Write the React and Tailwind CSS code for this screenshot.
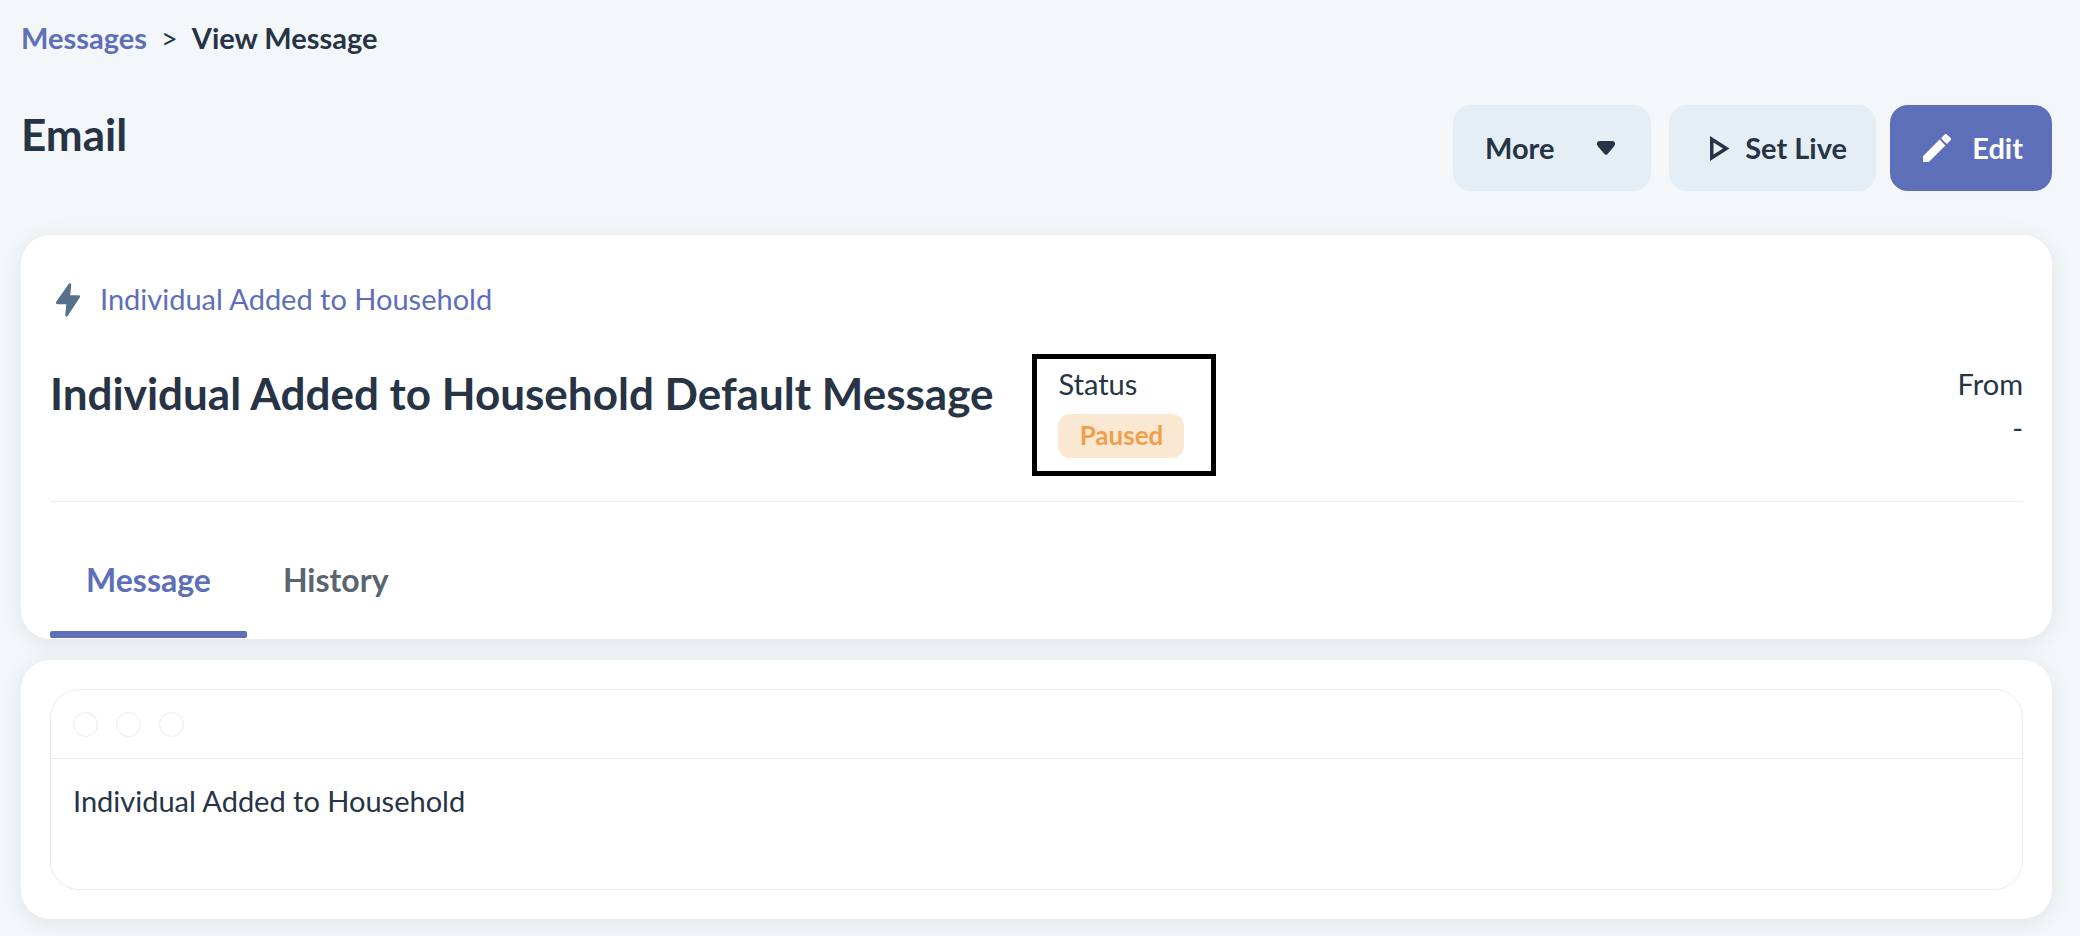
import { useState } from "react";

const tabs = ["Message", "History"];

function BoltIcon() {
  return (
    <svg width="24" height="34" viewBox="0 0 24 34" fill="#54708a" aria-hidden="true">
      <path d="M13 0.5C14.2 -0.3 15.4 0.6 15.2 2L14.2 12.2H22.5C24 12.2 24.4 13.4 23.7 14.6L11.6 33C10.6 34.3 9.2 33.6 9.3 32.2L10.3 21.2H1.4C0 21.2 -0.4 19.8 0.4 18.6Z" />
    </svg>
  );
}

function CaretIcon() {
  return (
    <svg width="18" height="14" viewBox="0 0 18 14" fill="currentColor" aria-hidden="true">
      <path d="M2.6 0H15.4C17.2 0 18 1 18 2.6C18 3.8 17.8 4.4 17 5.4L11 12.4C9.8 14.2 8.2 14.2 7 12.4L1 5.4C0.2 4.4 0 3.8 0 2.6C0 1 0.8 0 2.6 0Z" />
    </svg>
  );
}

function PlayIcon() {
  return (
    <svg width="20" height="25" viewBox="0 0 20 25" fill="currentColor" aria-hidden="true">
      <path fillRule="evenodd" d="M0 0L19.5 12.5L0 25ZM3.5 6.4V18.6L13 12.5Z" />
    </svg>
  );
}

function PencilIcon() {
  return (
    <svg width="28" height="28" viewBox="3 3 18 18" fill="currentColor" aria-hidden="true">
      <path d="M3 17.25V21h3.75L17.4 10.35l-3.75-3.75L3 17.25zM20.71 7.04a1 1 0 0 0 0-1.41l-2.34-2.34a1 1 0 0 0-1.41 0l-2.4 2.4 3.75 3.75 2.4-2.4z" />
    </svg>
  );
}

function App() {
  const [activeTab, setActiveTab] = useState("Message");

  return (
    <div className="min-h-screen bg-[#f3f7fa] pt-5 pl-[21px] pr-7 pb-4 font-[Lato,sans-serif] text-[29px] leading-9 text-[#263445]">
      <nav aria-label="Breadcrumb" className="flex gap-3.5 font-bold">
        <a href="#messages" className="text-[#5e6fba]">
          Messages
        </a>
        <span className="font-normal">&gt;</span>
        <span>View Message</span>
      </nav>

      <header className="mt-[49px] flex justify-between">
        <h1 className="mt-[5px] text-[44px] leading-12 font-bold">Email</h1>
        <div className="flex h-[86px] font-bold">
          <button className="mr-[18px] flex w-[198px] items-center justify-between rounded-[18px] bg-[#e5edf5] pl-8 pr-9">
            More
            <CaretIcon />
          </button>
          <button className="mr-3.5 flex w-[207px] items-center justify-between rounded-[18px] bg-[#e5edf5] pl-[41px] pr-[29px]">
            <PlayIcon />
            Set Live
          </button>
          <button className="flex w-[162px] items-center justify-between rounded-[18px] bg-[#5e6fba] pl-[33px] pr-[29px] text-white">
            <PencilIcon />
            Edit
          </button>
        </div>
      </header>

      <section className="mt-11 rounded-[29px] bg-white px-[29px] pt-[46px] pb-px shadow-[0_4px_24px_rgba(0,0,0,0.08)]">
        <div className="flex items-end gap-5 pl-1.5">
          <BoltIcon />
          <a href="#trigger" className="text-[#5e6fba]">
            Individual Added to Household
          </a>
        </div>

        <div className="mt-[37px] flex items-start border-b border-[#e5edf5] pb-[25px]">
          <h2 className="mt-[15px] text-[44px] leading-12 font-bold">
            Individual Added to Household Default Message
          </h2>
          <div className="ml-[39px] h-[122px] w-[184px] border-5 border-black pt-[7px] pl-[21px]">
            <p>Status</p>
            <span className="mt-3 flex h-11 w-[126px] items-center justify-center rounded-xl bg-[#fbe8d3] pb-0.5 text-[26px] font-bold text-[#f0a04b]">
              Paused
            </span>
          </div>
          <div className="mt-3 ml-auto text-right">
            <p>From</p>
            <p className="mt-2">-</p>
          </div>
        </div>

        <div role="tablist" className="mt-[38px] flex text-[32px] font-bold">
          {tabs.map((tab) => (
            <button
              key={tab}
              role="tab"
              aria-selected={tab === activeTab}
              onClick={() => setActiveTab(tab)}
              className={
                tab === activeTab
                  ? "flex flex-col text-[#5e6fba]"
                  : "flex flex-col text-[#5a6573]"
              }
            >
              <span className="px-9 pt-[22px] pb-[33px]">{tab}</span>
              {tab === activeTab && <span className="h-[7px] w-full rounded-xs bg-[#5e6fba]" />}
            </button>
          ))}
        </div>
      </section>

      <section className="mt-[21px] rounded-[29px] bg-white p-[29px] shadow-[0_4px_24px_rgba(0,0,0,0.08)]">
        <div className="rounded-[29px] border border-[#e5edf5]">
          <div className="flex gap-[18px] border-b border-[#e5edf5] px-[22px] pt-[22px] pb-[21px]">
            {[0, 1, 2].map((dot) => (
              <span key={dot} className="size-[25px] rounded-full border border-[#e5edf5]" />
            ))}
          </div>
          <p className="px-[22px] pt-6 pb-[70px]">Individual Added to Household</p>
        </div>
      </section>
    </div>
  );
}

export default App;
